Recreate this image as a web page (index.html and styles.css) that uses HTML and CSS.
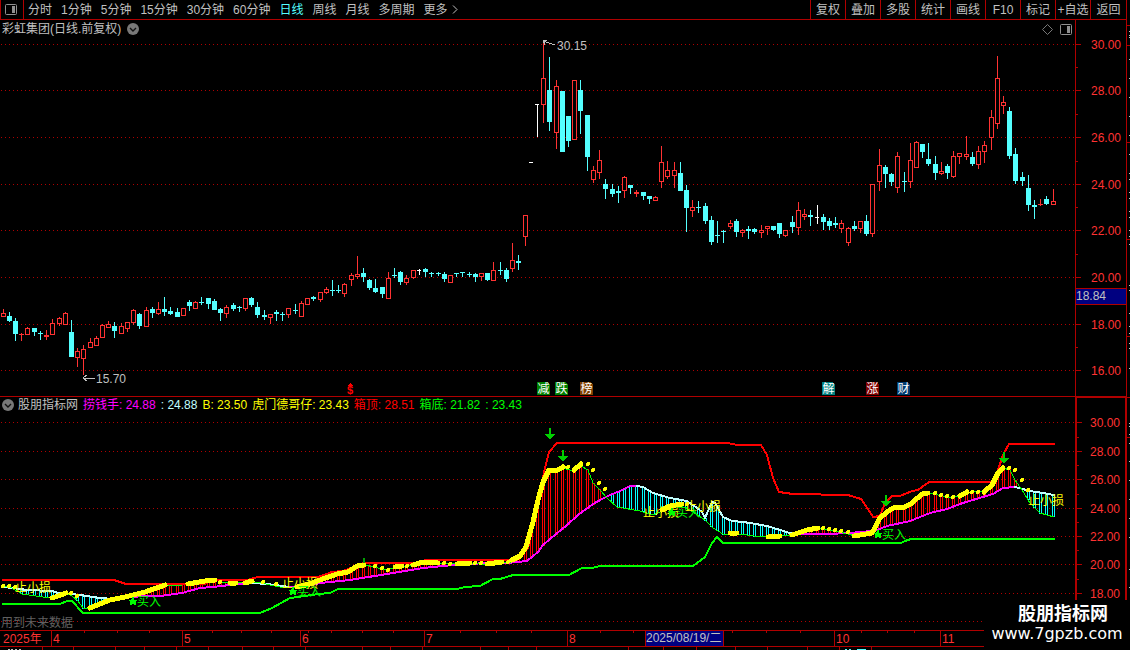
FILE: index.html
```html
<!DOCTYPE html>
<html lang="zh-CN">
<head>
    <meta charset="UTF-8">
    <meta name="viewport" content="width=device-width, initial-scale=1.0">
    <title>彩虹集团 日线</title>
    <link rel="stylesheet" href="styles.css">
</head>
<body>

<div class="app">
    <header class="toolbar">
        <button class="layout-btn" aria-label="布局">
            <svg width="12" height="11" viewBox="0 0 12 11"><rect x="0.5" y="0.5" width="11" height="10" rx="1" fill="none" stroke="#909090"/><rect x="7" y="2" width="3" height="7" fill="#909090"/></svg>
        </button>
        <nav class="periods">
            <button>分时</button>
            <button>1分钟</button>
            <button>5分钟</button>
            <button>15分钟</button>
            <button>30分钟</button>
            <button>60分钟</button>
            <button class="active">日线</button>
            <button>周线</button>
            <button>月线</button>
            <button>多周期</button>
            <button class="more">更多
                <svg width="6" height="9" viewBox="0 0 6 9"><path d="M1 0.5L5 4.5L1 8.5" fill="none" stroke="#c0c0c0"/></svg>
            </button>
        </nav>
        <div class="tools">
            <button>复权</button>
            <button>叠加</button>
            <button>多股</button>
            <button>统计</button>
            <button>画线</button>
            <button>F10</button>
            <button>标记</button>
            <button>+自选</button>
            <button>返回</button>
        </div>
    </header>

    <section class="panel main-panel">
        <div class="panel-head">
            <span>彩虹集团(日线.前复权)</span>
            <button class="fold-btn" aria-label="展开">
                <svg width="12" height="12" viewBox="0 0 12 12"><circle cx="6" cy="6" r="6" fill="#787878"/><path d="M3 5L6 8L9 5" fill="none" stroke="#111" stroke-width="1.4"/></svg>
            </button>
            <div class="head-icons">
                <svg width="11" height="11" viewBox="0 0 11 11"><path d="M5.5 0.5L10.5 5.5L5.5 10.5L0.5 5.5Z" fill="none" stroke="#787878"/></svg>
                <svg width="12" height="11" viewBox="0 0 12 11"><rect x="0.5" y="0.5" width="11" height="10" rx="1" fill="none" stroke="#909090"/><rect x="7" y="2" width="3" height="7" fill="#909090"/></svg>
            </div>
        </div>
        <svg id="kline" class="plot"></svg>
    </section>
    <svg id="klineScale" class="scale main-scale"></svg>

    <section class="panel sub-panel">
        <div class="panel-head legend">
            <button class="fold-btn" aria-label="展开">
                <svg width="12" height="12" viewBox="0 0 12 12"><circle cx="6" cy="6" r="6" fill="#787878"/><path d="M3 5L6 8L9 5" fill="none" stroke="#111" stroke-width="1.4"/></svg>
            </button>
            <span>股朋指标网</span>
            <span class="magenta">捞钱手: 24.88</span>
            <span class="pale">: 24.88</span>
            <span class="yellow">B: 23.50</span>
            <span class="yellow">虎门德哥仔: 23.43</span>
            <span class="red">箱顶: 28.51</span>
            <span class="green">箱底: 21.82</span>
            <span class="green">: 23.43</span>
        </div>
        <svg id="indicator" class="plot"></svg>
    </section>
    <svg id="indicatorScale" class="scale sub-scale"></svg>

    <svg id="timeline" class="timeline"></svg>
    <svg id="edge" class="edge"></svg>

    <div class="watermark">
        <strong>股朋指标网</strong>
        <span>www.7gpzb.com</span>
    </div>
</div>

<script src="script.js"></script>
</body>
</html>
```
FILE: styles.css
```css
* {
    box-sizing: border-box;
}

body {
    margin: 0;
    background: #000;
    color: #c0c0c0;
    font-family: "Liberation Sans", "Noto Sans CJK SC", sans-serif;
    font-size: 12px;
    line-height: 16px;
    overflow: hidden;
}

button {
    padding: 0;
    border: none;
    background: none;
    color: inherit;
    font: inherit;
    white-space: nowrap;
    cursor: pointer;
}

.app {
    position: relative;
    display: grid;
    grid-template-columns: minmax(0, 1fr) 51px 4px;
    grid-template-rows: 20px minmax(0, 377fr) minmax(0, 233fr) 20px;
    height: 100vh;
}

/* Toolbar */
.toolbar {
    grid-column: 1 / 3;
    display: flex;
    border-bottom: 1px solid #b00000;
}

.layout-btn {
    display: flex;
    align-items: center;
    width: 24px;
    padding-left: 4px;
    border-left: 1px solid #b00000;
    border-right: 1px solid #b00000;
}

.periods {
    flex: 1;
    display: flex;
    gap: 9px;
    padding-left: 4px;
}

.periods .active {
    color: #54ffff;
}

.more {
    display: flex;
    align-items: center;
    gap: 4px;
}

.tools {
    display: grid;
    grid-template-columns: repeat(8, 35px) 36px;
}

.tools button {
    border-left: 1px solid #b00000;
}

/* Chart panels */
.panel {
    position: relative;
    grid-column: 1;
    min-height: 0;
}

.main-panel,
.main-scale {
    border-bottom: 1px solid #b00000;
}

.panel-head {
    position: absolute;
    top: 1px;
    left: 2px;
    right: 3px;
    display: flex;
    align-items: center;
    gap: 6px;
}

.legend {
    top: 0;
    gap: 5px;
}

.legend .fold-btn {
    margin-right: -1px;
}

.fold-btn {
    display: flex;
}

.head-icons {
    display: flex;
    gap: 7px;
    margin-left: auto;
}

.magenta { color: #ff00ff; }
.pale { color: #c0ffff; }
.yellow { color: #ffff00; }
.red { color: #ff0000; }
.green { color: #00ff00; }

.plot,
.scale,
.timeline,
.edge {
    display: block;
    width: 100%;
    height: 100%;
    shape-rendering: crispEdges;
}

.scale {
    grid-column: 2;
    border-left: 1px solid #b00000;
}

.sub-scale {
    border-left-width: 2px;
    border-top: 1px solid #b00000;
    border-right: 1px solid #b00000;
}

.timeline {
    grid-column: 1 / 3;
    grid-row: 4;
}

.edge {
    grid-column: 3;
    grid-row: 1 / 5;
    border-left: 1px solid #b00000;
}

svg text {
    font-size: 12px;
}

svg .mark {
    font-size: 11px;
    font-weight: bold;
}

/* Site mark in the corner */
.watermark {
    position: absolute;
    right: 0;
    bottom: 0;
    display: flex;
    flex-direction: column;
    align-items: center;
    width: 146px;
    height: 50px;
    padding-top: 4px;
    background: #000;
    color: #fff;
    line-height: 20px;
}

.watermark strong {
    padding-left: 12px;
    font-size: 18px;
}

.watermark span {
    font-family: "DejaVu Sans", sans-serif;
    font-size: 16px;
}
```
FILE: script.js
```javascript
const NS = 'http://www.w3.org/2000/svg';
const LINE = '#b00000';
const RED = '#ff3232';
const CYAN = '#54ffff';
const GREY = '#c0c0c0';

// one candle per entry: type high top bottom low (r = up, c = down, w = flat)
const candles = `r 309 313 317 317|c 312 316 321 322|c 318 321 334 341|r 333 334 335 341|r 327 328 335 335
c 328 328 332 336|c 331 333 334 340|r 330 335 337 340|r 319 323 335 335|r 317 318 324 326
r 312 313 325 325|c 320 332 357 357|r 348 351 358 367|r 345 349 359 375|r 338 342 348 348
r 336 338 346 346|r 324 325 338 338|r 321 324 328 328|c 322 326 331 338|r 323 326 334 334
r 322 322 329 332|r 309 310 323 325|c 313 314 326 329|r 307 310 327 327|c 307 309 313 318
r 302 309 314 315|c 297 309 312 316|c 307 311 314 315|c 308 312 317 317|r 308 308 316 316
c 300 302 306 311|r 301 302 309 309|c 297 302 303 305|c 298 298 304 309|c 299 301 310 310
c 308 309 313 321|r 305 307 314 318|c 303 305 309 311|c 306 307 308 312|r 298 298 309 311
c 297 298 305 307|c 302 307 315 318|c 310 315 317 320|r 314 314 318 324|c 310 312 314 321
c 312 314 315 321|r 308 308 315 318|c 304 310 311 314|r 301 303 317 317|r 298 298 305 305
c 296 297 299 301|r 292 292 300 302|r 287 289 293 294|c 280 290 291 296|c 285 290 291 293
r 283 284 294 297|r 273 275 280 286|r 256 274 277 279|c 268 273 277 282|c 279 280 288 290
c 279 288 292 293|c 287 287 294 298|r 272 278 299 299|c 268 275 276 278|c 271 272 282 285
r 275 278 283 285|r 270 270 278 279|w 269 270 271 275|c 268 269 272 277|c 272 273 274 277
c 272 273 274 276|c 272 274 279 282|r 275 275 283 283|c 273 273 274 277|c 272 272 273 277
c 272 274 275 277|c 273 274 277 282|r 273 273 277 281|c 273 273 280 281|r 262 270 281 281
c 262 270 271 275|c 268 270 279 282|r 243 260 269 272|c 255 261 263 270|r 215 215 237 246
w 162 162 163 163|w 104 104 105 137|r 41 78 105 123|c 57 90 122 131|r 80 86 133 149
c 91 91 152 152|c 116 116 141 147|r 80 80 140 140|c 80 90 111 134|c 115 115 157 171
r 166 170 180 183|r 150 160 173 179|c 179 184 189 199|c 184 189 194 197|c 186 191 193 203
r 176 177 191 198|c 185 185 188 194|r 190 192 194 197|c 192 192 196 200|c 196 196 199 204
r 196 197 201 201|r 146 162 182 188|r 161 170 177 179|r 162 170 176 188|c 162 173 191 191
c 185 190 208 232|r 200 207 211 217|c 201 207 208 213|c 203 206 221 224|c 216 220 242 245
c 221 235 236 243|c 230 231 232 243|r 220 223 227 229|c 219 221 232 237|r 229 230 233 237
c 226 229 231 239|c 228 229 232 234|r 225 230 233 238|r 226 226 229 235|c 226 226 230 231
c 223 223 234 238|r 230 230 236 237|c 216 222 227 233|r 202 210 228 235|r 209 214 217 220
c 210 215 217 226|w 205 217 218 224|c 214 217 222 230|c 218 221 226 230|c 217 223 225 228
r 220 223 229 233|r 227 228 243 246|c 221 226 229 231|r 221 221 229 233|c 215 221 234 236
r 184 184 234 237|r 149 165 182 191|c 165 167 174 188|c 173 174 182 186|r 152 156 188 193
c 172 181 182 192|r 143 160 182 188|r 141 142 168 168|c 144 144 152 158|c 143 159 164 166
c 156 164 173 180|r 162 171 174 175|c 164 166 173 179|r 151 156 177 178|r 153 153 157 164
r 136 154 157 160|c 152 157 164 166|r 146 151 165 169|r 141 145 152 163|r 110 117 138 150
r 56 78 124 129|r 96 102 106 114|c 107 111 156 159|c 148 154 181 184|c 172 177 181 186
c 175 188 205 211|c 200 205 207 219|r 199 204 205 206|c 196 199 204 205|r 189 201 205 205`
    .split(/[|\n]/).map(s => s.trim().split(' '));

const pts = s => s.trim().split(/\s+/).map(p => p.split(',').map(Number));

const boxTop = pts(`3,580 114,580 126,584 205,584 210,580 247,580 258,577 318,577 332,572 343,571 364,563
420,563 425,560 514,560 528,548 538,500 545,468 549,452 557,443 728,443 737,445 761,445 767,455 773,478 779,492
793,494 848,495 861,499 868,509 873,517 880,516 885,503 892,496 900,496 912,491 918,490 929,482 992,482
998,470 1003,455 1009,444 1054,444`);

const boxBottom = pts(`3,604 60,604 67,601 72,601 83,613 260,613 272,608 290,598 305,596 318,594 330,593
338,589 457,589 465,587 480,586 493,579 500,579 513,575 569,575 582,568 592,568 600,566 693,566 705,557
712,543 717,537 723,543 901,543 905,541 911,539 1054,539`);

const slow = pts(`3,587 13,588 27,590 52,591 58,593 72,594 80,595 87,596 93,597 100,598 113,599 143,596 160,596
182,593 200,588 223,586 233,584 253,583 267,584 290,587 307,586 320,583 350,580 387,574 423,568 453,565 487,563
507,563 527,561 538,552 543,545 550,539 567,525 578,515 593,504 602,499 610,495 620,491 630,486 637,486 643,487
653,493 670,498 687,501 697,508 702,512 705,518 712,502 715,503 723,517 732,521 743,522 750,523 767,526 780,530
790,533 800,534 830,534 847,533 863,532 877,530 887,526 910,521 930,513 947,509 963,503 983,497 993,494
1003,488 1015,487 1030,491 1043,493 1054,495`);

const fast = pts(`3,586 10,587 17,591 22,594 50,598 58,596 66,593 72,596 78,601 83,608 90,608 110,599 125,597
145,592 165,585 175,586 190,584 205,581 217,580 222,582 258,582 270,585 285,588 300,587 310,584 320,580 337,574
348,572 357,566 364,565 375,567 385,570 397,567 413,565 423,562 438,563 453,564 470,563 487,565 502,563 512,562
517,558 527,548 533,523 538,502 543,483 549,470 558,470 562,468 570,470 574,470 581,466 588,470 593,483 600,490
607,498 617,507 640,511 653,515 660,512 670,508 680,506 690,510 705,520 713,528 723,534 747,535 760,537 780,536
792,535 807,531 818,528 830,530 848,534 855,536 872,533 880,518 887,512 895,507 905,507 912,503 922,494 928,493
938,495 953,498 965,493 983,491 992,485 998,473 1003,468 1010,470 1015,480 1022,490 1030,503 1040,513 1054,517`);

// strong trend runs, drawn thick
const runs = [
    '52,598 58,596 66,593', '90,608 110,600 125,597 145,592 165,585', '188,584 205,581 215,580',
    '230,583 236,583', '245,583 252,581', '297,587 310,584 320,580 337,574 348,572 357,566 364,565',
    '395,567 402,566', '413,565 423,562 438,563', '457,564 470,563', '487,564 502,562',
    '512,560 520,556 526,547 533,522 538,500 543,482 549,470 558,470 563,467', '574,470 581,464',
    '662,510 670,506 682,504', '730,533 737,533', '768,537 780,536', '792,535 807,530 818,528',
    '854,536 866,534 872,533 880,518 887,512 895,507 905,507 912,503 922,494 928,493',
    '960,496 967,492', '984,492 992,485 998,473 1003,468'
].map(pts);

const dots = pts(`3,586 9,586 15,587 71,593 77,596 220,582 263,582 276,584 375,566 382,568 388,570 407,566
444,563 450,564 475,563 481,563 508,562 568,467 588,464 593,470 599,483 605,489 687,504 823,528 829,529 835,530
841,531 848,532 935,493 941,495 947,496 953,497 972,492 978,492 1009,468 1015,470 1022,480 1028,490`);

const arrows = [[550, 428], [563, 450], [886, 495], [1004, 452]];
const buys = [[133, 601], [293, 591], [672, 512], [878, 534]];
const stops = [[15, 592], [282, 588], [643, 517], [685, 511], [1028, 505]];
const tags = [[537, '减', '#008000'], [555, '跌', '#008000'], [580, '榜', '#804000'],
    [822, '解', '#008080'], [866, '涨', '#800000'], [897, '财', '#003c70']];

// baseW/baseH: units the data is in, top: y of the first row
function surface(id, baseW, baseH, top) {
    const svg = document.getElementById(id);
    svg.innerHTML = '';
    const box = svg.getBoundingClientRect();
    const style = getComputedStyle(svg);
    const w = box.width - parseFloat(style.borderLeftWidth) - parseFloat(style.borderRightWidth);
    const h = box.height - parseFloat(style.borderTopWidth) - parseFloat(style.borderBottomWidth);
    const X = v => v * w / baseW;
    const Y = v => (v - top) * h / baseH;
    const add = (name, attrs, text) => {
        const el = document.createElementNS(NS, name);
        for (const k in attrs) el.setAttribute(k, attrs[k]);
        if (text) el.textContent = text;
        svg.appendChild(el);
        return el;
    };
    return {
        X, Y, w, h, add,
        rect: (x, y, rw, rh, fill) => add('rect', { x: X(x), y: Y(y), width: rw, height: rh, fill }),
        text: (x, y, str, fill) => add('text', { x: X(x), y: Y(y), fill }, str),
        line: (p, stroke, width) => add('polyline', {
            points: p.map(a => X(a[0]) + ',' + Y(a[1])).join(' '),
            fill: 'none', stroke, 'stroke-width': width, 'stroke-linejoin': 'round', 'stroke-linecap': 'round'
        })
    };
}

const slot = i => Math.floor(3.14 + 6.213 * i);

function valueAt(series, x) {
    for (let i = 1; i < series.length; i++) {
        const [x0, y0] = series[i - 1];
        const [x1, y1] = series[i];
        if (x <= x1) return y0 + (y1 - y0) * (x - x0) / (x1 - x0);
    }
    return series[series.length - 1][1];
}

function grid(s, rows) {
    rows.forEach(y => s.add('line', {
        x1: 1, x2: s.w, y1: s.Y(y) + 0.5, y2: s.Y(y) + 0.5, stroke: LINE, 'stroke-dasharray': '1 3'
    }));
}

function drawKline() {
    const s = surface('kline', 1075, 376, 20);
    grid(s, [44, 90, 137, 184, 230, 277, 324, 370]);

    candles.forEach(([type, ...v], i) => {
        const [high, top, bottom, low] = v.map(Number);
        const x = slot(i);
        const color = { r: RED, c: CYAN, w: '#ffffff' }[type];
        const height = y => s.Y(y) - s.Y(0);
        if (top > high) s.rect(x, high, 1, height(top - high), color);
        if (low > bottom) s.rect(x, bottom, 1, height(low - bottom), color);
        if (type === 'r' && bottom - top > 2) {
            s.add('rect', {
                x: s.X(x) - 1.5, y: s.Y(top) + 0.5, width: 4, height: height(bottom - top) - 1,
                fill: '#000', stroke: color
            });
        } else {
            s.add('rect', { x: s.X(x) - 2, y: s.Y(top), width: type === 'w' ? 4 : 5, height: height(bottom - top), fill: color });
        }
    });

    s.line([[543, 41], [555, 45]], GREY, 1);
    s.line([[547, 40], [543, 40], [545, 45]], GREY, 1);
    s.text(557, 50, '30.15', GREY);
    s.line([[83, 378], [95, 378]], GREY, 1);
    s.line([[87, 375], [83, 378], [87, 381]], GREY, 1);
    s.text(96, 383, '15.70', GREY);

    s.add('path', { d: `M${s.X(350) - 3} ${s.Y(386)}l3 -3l3 3z`, fill: '#ff0000' });
    s.text(347, 394, '$', '#ff0000').setAttribute('class', 'mark');

    tags.forEach(([x, name, color]) => {
        s.add('path', { d: `M${s.X(x)} ${s.Y(382)}h10l3 3v10h-13z`, fill: color });
        s.text(x + 0.5, 393, name, '#ffffff');
    });
}

function drawIndicator() {
    const s = surface('indicator', 1075, 233, 397);
    grid(s, [422, 451, 479, 508, 536, 564, 593, 621]);

    candles.forEach((c, i) => {
        const x = slot(i);
        const a = valueAt(slow, x);
        const b = valueAt(fast, x);
        if (Math.abs(a - b) < 2) return;
        const y = Math.min(a, b);
        s.add('rect', {
            x: s.X(x) - 0.5, y: s.Y(y), width: 2, height: s.Y(y + Math.abs(a - b)) - s.Y(y),
            fill: '#000', stroke: b < a ? '#ff0000' : '#00ffff'
        });
    });

    for (let i = 1; i < slow.length; i++) {
        // a sudden jump is a rebound, not a rising trend
        const rise = slow[i - 1][1] - slow[i][1];
        s.line([slow[i - 1], slow[i]], rise >= 0 && rise < 15 ? '#ff00ff' : '#c0ffff', 2);
    }
    s.line(fast, '#00ff00', 1);
    s.line(boxTop, '#ff0000', 2);
    s.line(boxBottom, '#00ff00', 2);
    runs.forEach(p => s.line(p, '#ffff00', 5));
    dots.forEach(([x, y]) => s.add('circle', { cx: s.X(x), cy: s.Y(y), r: 2, fill: '#ffff00' }));

    stops.forEach(([x, y]) => s.text(x, y, '止小损', '#ffff00'));
    buys.forEach(([x, y]) => {
        s.add('path', {
            d: `M${s.X(x)} ${s.Y(y) - 5}l1.5 3.5h3.5l-2.5 2.5l1 4l-3.5 -2.5l-3.5 2.5l1 -4l-2.5 -2.5h3.5z`,
            fill: '#00ff00'
        });
        s.text(x + 4, y + 5, '买入', '#00ff00');
    });
    arrows.forEach(([x, y]) => s.add('path', {
        d: `M${s.X(x) - 1} ${s.Y(y)}h2v6h4l-5 6l-5 -6h4z`, fill: '#00d000'
    }));
    s.rect(363, 558, 2, 5, '#00a000');
    s.text(1, 627, '用到未来数据', '#606060');
}

function drawScale(id, baseH, top, rows, from) {
    const s = surface(id, 50, baseH, top);
    rows.forEach((y, i) => {
        s.rect(0, y, 5, 1, LINE);
        if (i < rows.length - 1) s.rect(0, Math.round((y + rows[i + 1]) / 2), 2, 1, LINE);
        s.add('text', { x: s.w - 5, y: s.Y(y) + 5, fill: RED, 'text-anchor': 'end' }, (from - i * 2).toFixed(2));
    });
    return s;
}

function drawScales() {
    const s = drawScale('klineScale', 376, 20, [44, 90, 137, 184, 230, 277, 324, 370], 30);
    s.rect(0, 288, s.w, 17, LINE);
    s.rect(0, 289, s.w, 15, '#000080');
    s.text(0, 300, '18.84', GREY);
    drawScale('indicatorScale', 232, 398, [422, 451, 479, 508, 536, 564, 593], 30);
}

function drawTimeline() {
    const s = surface('timeline', 1126, 20, 630);
    s.rect(0, 630, s.w, 1, LINE);
    s.rect(0, 646, s.w, 1, LINE);
    [[51, '4'], [182, '5'], [300, '6'], [424, '7'], [567, '8'], [834, '10'], [940, '11']].forEach(([x, name]) => {
        s.rect(x, 630, 1, 16, LINE);
        s.text(x + 2, 643, name, RED);
    });
    s.text(3, 643, '2025年', RED);
    [84, 117, 149, 212, 241, 271, 308, 331, 362, 393, 460, 496, 531, 600, 633, 732, 766, 800, 861, 887, 914]
        .forEach(x => s.rect(x, 631, 1, 2, LINE));
    [42, 73, 115, 144, 176, 208, 242, 273, 305, 362, 390, 422, 480, 508, 536, 628, 663, 696, 735, 767, 807, 839, 871]
        .forEach(x => s.rect(x, 647, 1, 3, LINE));
    // tops of the strip below
    [8, 11, 15, 19].forEach(x => s.rect(x, 649, 2, 1, GREY));
    [[845, 2], [849, 2], [857, 9]].forEach(([x, w]) => s.rect(x, 649, w, 1, CYAN));
    s.rect(645, 630, 79, 17, LINE);
    s.rect(646, 631, 77, 15, '#000080');
    s.text(646, 642, '2025/08/19/二', GREY);
}

function drawEdge() {
    const s = surface('edge', 3, 650, 0);
    [25, 45, 142, 239, 336, 397, 437].forEach(y => s.rect(0, y, 3, 1, LINE));
    [31, 35, 37, 59, 78, 97, 116, 135, 154, 173, 179, 192, 198, 211, 217, 230, 236, 244, 285, 290, 313, 326, 333,
        343, 348, 368, 423, 426, 434, 443, 461, 480, 499, 518, 537, 569, 587].forEach(y => s.rect(2, y, 1, 1, GREY));
}

function drawAll() {
    drawKline();
    drawIndicator();
    drawScales();
    drawTimeline();
    drawEdge();
}

window.addEventListener('resize', drawAll);
drawAll();
```
